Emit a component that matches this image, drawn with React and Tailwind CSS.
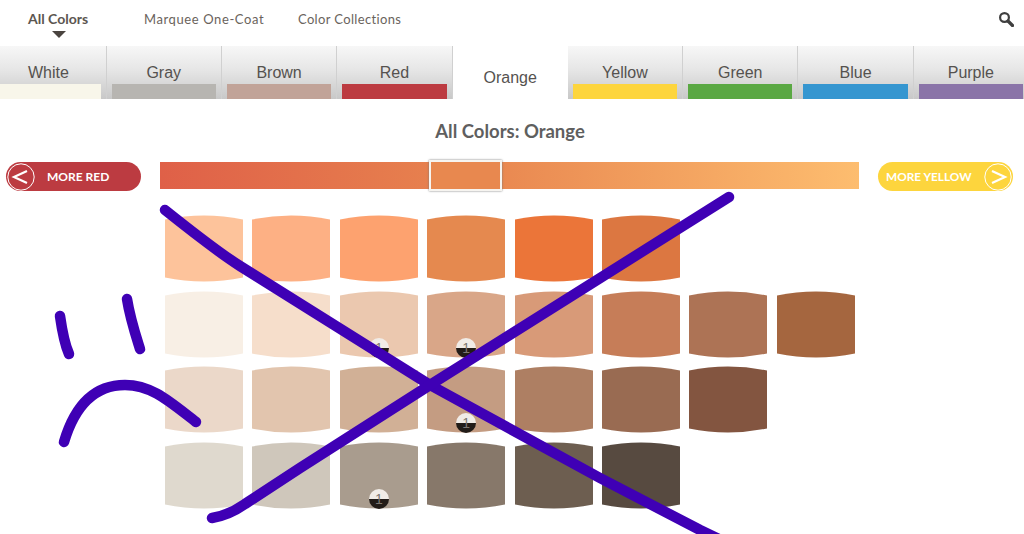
const tabs = [
  { name: 'White', color: 'bg-[#f8f6ea]' },
  { name: 'Gray', color: 'bg-[#b7b5b1]' },
  { name: 'Brown', color: 'bg-[#c1a398]' },
  { name: 'Red', color: 'bg-[#bc3b41]' },
  { name: 'Orange', active: true },
  { name: 'Yellow', color: 'bg-[#fdd53d]' },
  { name: 'Green', color: 'bg-[#5aa843]' },
  { name: 'Blue', color: 'bg-[#3596d0]' },
  { name: 'Purple', color: 'bg-[#8a74a8]' },
]

// badge = row holds a "1" marker on that swatch
const rows = [
  [{ c: '#fdc39b' }, { c: '#fdb084' }, { c: '#fda26f' }, { c: '#e5894f' }, { c: '#eb7539' }, { c: '#dc7741' }],
  [{ c: '#f8efe5' }, { c: '#f6decb' }, { c: '#ebc8af', badge: true }, { c: '#d9a688', badge: true }, { c: '#d89a78' }, { c: '#c67d58' }, { c: '#ad7355' }, { c: '#a5663f' }],
  [{ c: '#ebd8c9' }, { c: '#e2c5ae' }, { c: '#d1b096' }, { c: '#c49c82', badge: true }, { c: '#ae7f63' }, { c: '#996b52' }, { c: '#835540' }],
  [{ c: '#dfd9ce' }, { c: '#cfc7bb' }, { c: '#a99c8e', badge: true }, { c: '#87786a' }, { c: '#6d5e50' }, { c: '#574a40' }],
]

function Swatch({ c, badge }) {
  return (
    <div className="relative h-[67px] w-[78px] shrink-0">
      <svg viewBox="0 0 78 67" className="block h-[67px] w-[78px]">
        <path d="M0 4.5 Q39 -3.5 78 4.5 V62.5 Q39 70.5 0 62.5 Z" fill={c} />
      </svg>
      {badge && (
        <div className="absolute bottom-0 left-[29px] flex h-[20px] w-[20px] items-center justify-center rounded-full bg-[linear-gradient(180deg,#f1ece7_50%,#221c18_50%)] font-['Liberation_Sans',sans-serif] text-[14px] leading-none text-[#7d7772]">
          1
        </div>
      )}
    </div>
  )
}

function Chevron({ flip }) {
  return (
    <svg viewBox="0 0 28 28" className="h-[28px] w-[28px]">
      <circle cx="14" cy="14" r="13.2" fill="none" stroke="#fff" strokeWidth="1" />
      <path d={flip ? 'M8 8 L21 14 L8 20' : 'M20 8 L7 14 L20 20'} fill="none" stroke="#fff" strokeWidth="2.2" />
    </svg>
  )
}

export default function App() {
  return (
    <div className="relative h-[534px] w-[1024px] overflow-hidden bg-white font-['Lato','Noto_Sans',sans-serif]">
      <nav className="flex h-[46px] pl-[28px] pt-[11px] text-[13px] leading-[17px] text-[#6a635c]">
        <div className="flex w-[116px] flex-col">
          <span className="mt-[-1px] text-[14px] font-bold text-[#5c5650]">All Colors</span>
          <span className="ml-[24px] mt-[4px] h-0 w-0 border-x-[7px] border-t-[7px] border-x-transparent border-t-[#4a4440]" />
        </div>
        <span className="w-[154px] tracking-[0.6px]">Marquee One-Coat</span>
        <span className="tracking-[0.35px]">Color Collections</span>
        <svg viewBox="0 0 16 16" className="absolute left-[998px] top-[11px] h-[16px] w-[16px]">
          <circle cx="6.5" cy="6.5" r="4.4" fill="none" stroke="#3f3f3f" strokeWidth="2.2" />
          <path d="M10 10 L14.5 14.5" stroke="#3f3f3f" strokeWidth="3.2" strokeLinecap="round" />
        </svg>
      </nav>

      <div className="ml-[-8.7px] flex h-[53px] w-[1040px] font-['Liberation_Sans',sans-serif] text-[16px] text-[#55524f]">
        {tabs.map((t) =>
          t.active ? (
            <div key={t.name} className="flex h-[53px] w-[115.3px] shrink-0 justify-center bg-white pt-[22px] leading-[20px]">
              {t.name}
            </div>
          ) : (
            <div
              key={t.name}
              className="flex h-[53px] w-[115.3px] shrink-0 flex-col border-r border-[#d0d0d0] bg-[linear-gradient(180deg,#f7f7f7_0%,#e6e6e6_45%,#c8c8c8_100%)] pt-[17px] text-center leading-[20px]"
            >
              <span>{t.name}</span>
              <span className={`mx-[5px] mt-[1px] h-[15px] ${t.color}`} />
            </div>
          ),
        )}
      </div>

      <h1 className="mt-[22px] h-[20px] pr-[4px] text-center text-[18.5px] font-bold leading-[20px] text-[#5f5f5f]">
        All Colors: Orange
      </h1>

      <div className="mt-[21px] flex h-[29px] items-start pl-[6px]">
        <button className="flex h-[29px] w-[135px] items-center rounded-full bg-[#bc3b41] pl-[1px] text-[12px] font-bold text-white">
          <Chevron />
          <span className="ml-[12px]">MORE RED</span>
        </button>
        <div className="relative ml-[19px] h-[27px] w-[699px] bg-[linear-gradient(90deg,#df6048_0%,#e8854f_45%,#fdbd6f_100%)]">
          <div className="absolute left-[269px] top-[-2px] h-[31px] w-[73px] border-2 border-[#f6f4f0] bg-[#e8884f] shadow-[0_0_2px_#777]" />
        </div>
        <button className="ml-[19px] flex h-[29px] w-[135px] items-center justify-between rounded-full bg-[#fdd53d] pl-[8px] pr-[1px] text-[11.8px] font-bold text-white">
          <span>MORE YELLOW</span>
          <Chevron flip />
        </button>
      </div>

      <div className="mt-[24px] flex flex-col gap-[8.7px] pl-[165px]">
        {rows.map((row, i) => (
          <div key={i} className="flex gap-[9.4px]">
            {row.map((s) => (
              <Swatch key={s.c} c={s.c} badge={s.badge} />
            ))}
          </div>
        ))}
      </div>

      {/* hand-drawn marks over the page */}
      <svg viewBox="0 0 1024 534" className="pointer-events-none absolute inset-0 h-[534px] w-[1024px]">
        <g fill="none" stroke="#3f00b5" strokeWidth="10.5" strokeLinecap="round" strokeLinejoin="round">
          <path d="M165 210 C190 230 215 250 240 266 L430 385 L600 478 L700 530 L725 542" />
          <path d="M729 197 L430 385 L300 468 L245 504 C235 511 225 516 212 518" />
          <path d="M60 316 C62 330 65 345 69 354" />
          <path d="M127 299 C130 318 135 333 140 349" />
          <path d="M64 442 C75 405 95 385 125 385 C152 385 170 402 196 422" />
        </g>
      </svg>
    </div>
  )
}
